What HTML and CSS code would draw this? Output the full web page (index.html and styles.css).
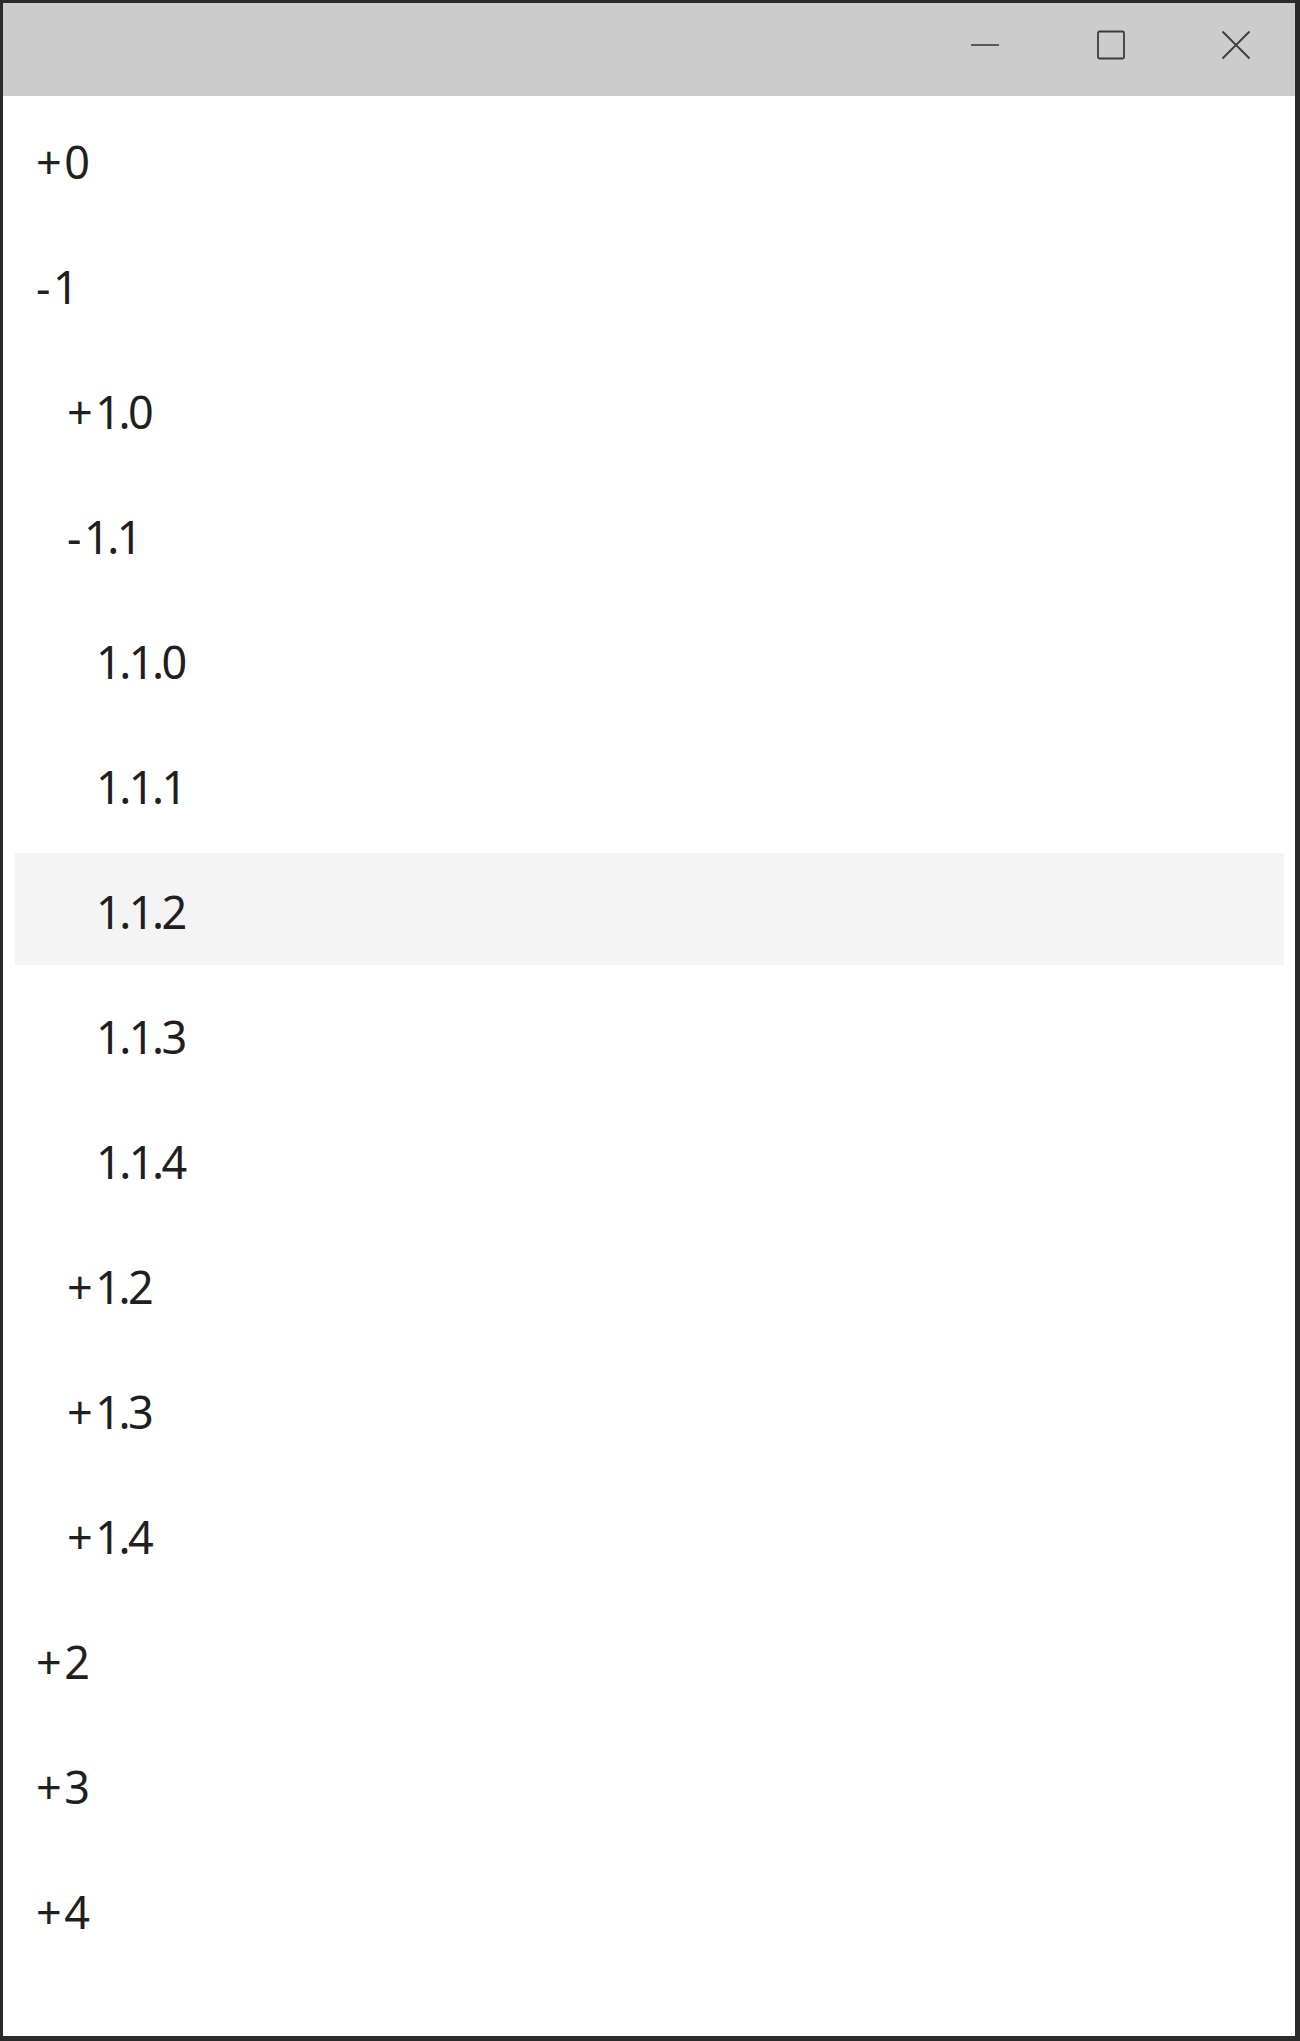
FILE: index.html
```html
<!DOCTYPE html>
<html lang="en">
<head>
<meta charset="utf-8">
<title>TreeView</title>
<link rel="stylesheet" href="styles.css">
</head>
<body>
<div class="window">
  <div class="titlebar">
    <div class="caption-btn">
      <svg width="30" height="30" viewBox="0 0 30 30"><line x1="1" y1="15" x2="29" y2="15" stroke="#3c3c3c" stroke-width="1.6"/></svg>
    </div>
    <div class="caption-btn">
      <svg width="30" height="30" viewBox="0 0 30 30"><rect x="2" y="1.5" width="26" height="27" rx="1.5" fill="none" stroke="#3c3c3c" stroke-width="1.8"/></svg>
    </div>
    <div class="caption-btn">
      <svg width="30" height="30" viewBox="0 0 30 30"><path d="M1.5 1.5 L28.5 28.5 M28.5 1.5 L1.5 28.5" stroke="#3c3c3c" stroke-width="1.8" fill="none"/></svg>
    </div>
  </div>
  <ul class="tree">
    <li class="node lvl0"><span class="glyph">+</span>0</li>
    <li class="node lvl0"><span class="glyph">-</span>1</li>
    <li class="node lvl1"><span class="glyph">+</span>1.0</li>
    <li class="node lvl1"><span class="glyph">-</span>1.1</li>
    <li class="node lvl2">1.1.0</li>
    <li class="node lvl2">1.1.1</li>
    <li class="node lvl2 hover">1.1.2</li>
    <li class="node lvl2">1.1.3</li>
    <li class="node lvl2">1.1.4</li>
    <li class="node lvl1"><span class="glyph">+</span>1.2</li>
    <li class="node lvl1"><span class="glyph">+</span>1.3</li>
    <li class="node lvl1"><span class="glyph">+</span>1.4</li>
    <li class="node lvl0"><span class="glyph">+</span>2</li>
    <li class="node lvl0"><span class="glyph">+</span>3</li>
    <li class="node lvl0"><span class="glyph">+</span>4</li>
  </ul>
</div>
</body>
</html>
```

FILE: styles.css
```css
html, body {
  margin: 0;
  padding: 0;
  background: #ffffff;
}

.window {
  box-sizing: border-box;
  width: 1300px;
  height: 2041px;
  border-top: 3px solid #2b2b2b;
  border-left: 3px solid #2b2b2b;
  border-right: 5px solid #2b2b2b;
  border-bottom: 5px solid #2b2b2b;
  background: #ffffff;
  display: flex;
  flex-direction: column;
  overflow: hidden;
}

.titlebar {
  height: 93px;
  flex: none;
  background: #cccccc;
  display: flex;
  justify-content: flex-end;
  align-items: flex-start;
  gap: 7.5px;
}

.caption-btn {
  width: 118px;
  height: 84px;
  display: flex;
  align-items: center;
  justify-content: center;
}

.caption-btn svg {
  display: block;
}

.tree {
  list-style: none;
  margin: 0;
  padding: 7px 11px 0 12px;
  display: flex;
  flex-direction: column;
  gap: 13px;
}

.node {
  height: 112px;
  line-height: 106px;
  padding-top: 6px;
  box-sizing: border-box;
  font-family: "Noto Sans", "Open Sans", sans-serif;
  font-size: 45px;
  letter-spacing: -2.5px;
  color: #1f1f1f;
  white-space: nowrap;
}

.glyph {
  margin-right: 5px;
}

.node.hover {
  background: #f4f4f4;
}

.lvl0 { padding-left: 21px; }
.lvl1 { padding-left: 52px; }
.lvl2 { padding-left: 81px; }
```
